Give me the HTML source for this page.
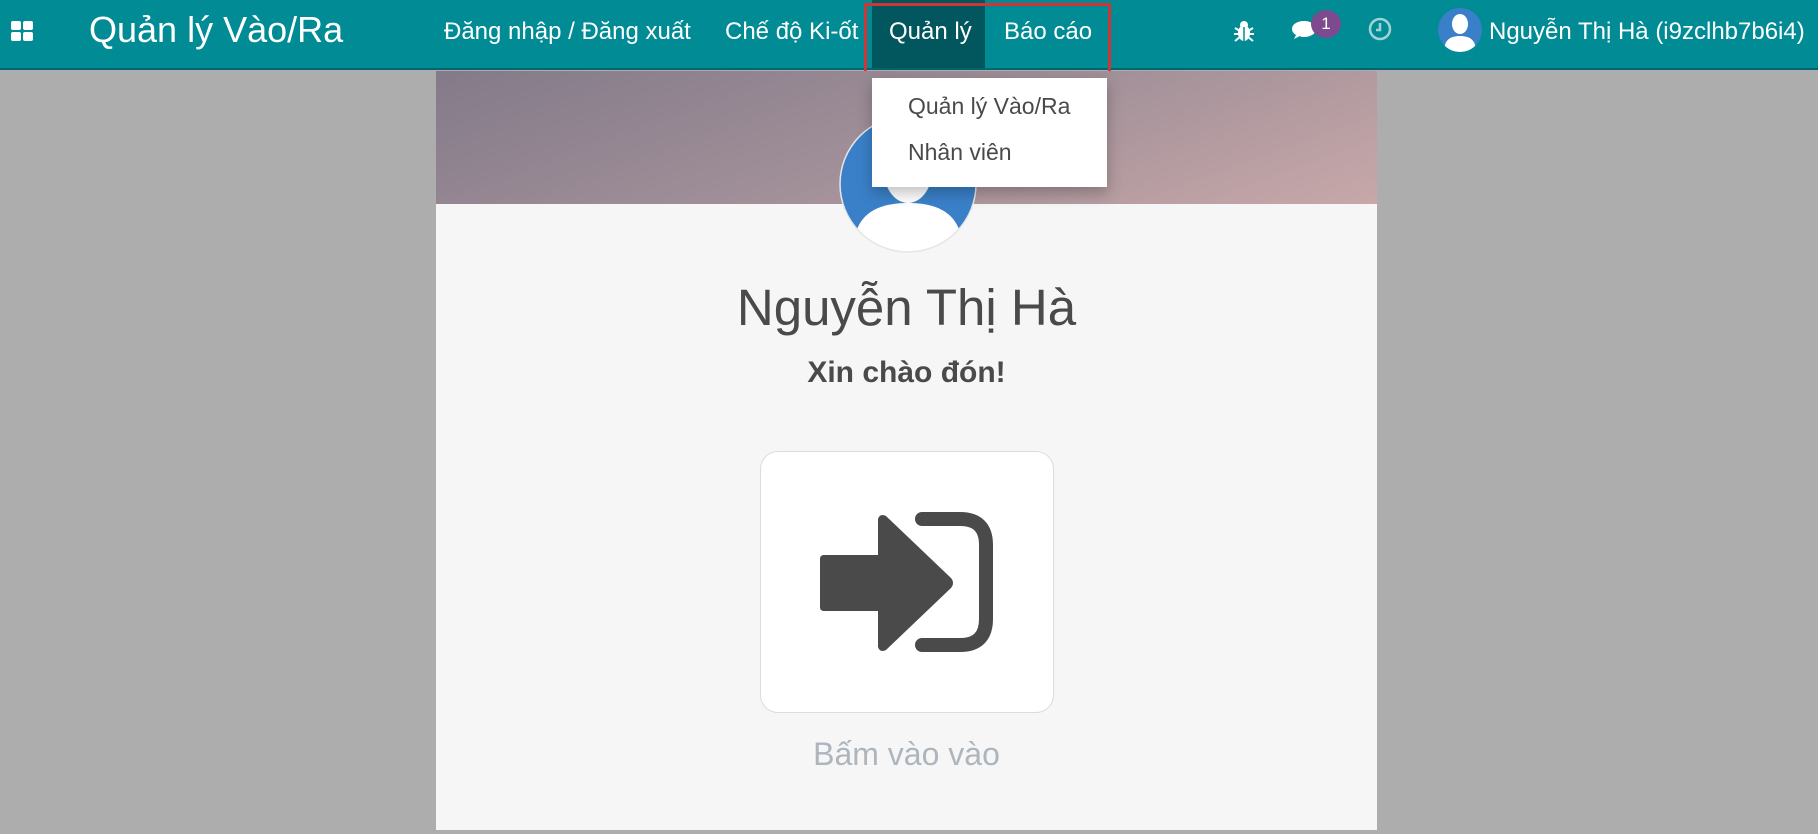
<!DOCTYPE html>
<html><head><meta charset="utf-8"><style>
*{margin:0;padding:0;box-sizing:border-box}
body{width:1818px;height:834px;background:#adadad;font-family:"Liberation Sans",sans-serif;position:relative;overflow:hidden}
.nav{position:absolute;left:0;top:0;width:1818px;height:70px;background:#018b95;border-bottom:2px solid #01666d}
.t{position:absolute;color:#fff;white-space:nowrap}
.abs{position:absolute}
</style></head><body>
<div class="nav">
  <svg class="abs" style="left:11px;top:21px" width="22" height="20" viewBox="0 0 22 20"><rect x="0" y="0" width="10" height="9" rx="2" fill="#fff"/><rect x="12" y="0" width="10" height="9" rx="2" fill="#fff"/><rect x="0" y="11" width="10" height="9" rx="2" fill="#fff"/><rect x="12" y="11" width="10" height="9" rx="2" fill="#fff"/></svg>
  <div class="t" style="left:89px;top:9px;font-size:36px">Quản lý Vào/Ra</div>
  <div class="t" style="left:444px;top:18px;font-size:24px">Đăng nhập / Đăng xuất</div>
  <div class="t" style="left:725px;top:18px;font-size:24px">Chế độ Ki-ốt</div>
  <div class="abs" style="left:872px;top:0;width:113px;height:68px;background:#01575d"></div>
  <div class="t" style="left:889px;top:18px;font-size:24px">Quản lý</div>
  <div class="t" style="left:1004px;top:18px;font-size:24px">Báo cáo</div>
  <svg class="abs" style="left:1233px;top:19px" width="22" height="24" viewBox="0 0 22 24"><ellipse cx="11" cy="14" rx="6" ry="8" fill="#fff"/><circle cx="11" cy="6" r="4" fill="#fff"/><path d="M2 9l5 3M20 9l-5 3M1 15h6M21 15h-6M2 22l5-4M20 22l-5-4" stroke="#fff" stroke-width="2"/><path d="M11 8v14" stroke="#018b95" stroke-width="1.5"/></svg>
  <svg class="abs" style="left:1290px;top:19px" width="30" height="26" viewBox="0 0 30 26"><path d="M2 10c0-5 6-8 12-8s12 3 12 8-6 8-12 8c-2 0-3 0-4-1l-6 3 2-4C3 14 2 12 2 10z" fill="#fff"/></svg>
  <div class="abs" style="left:1311px;top:10px;width:30px;height:28px;border-radius:50%;background:#7c4a8d;color:#fff;font-size:17px;text-align:center;line-height:28px">1</div>
  <svg class="abs" style="left:1367px;top:16px" width="26" height="26" viewBox="0 0 26 26"><circle cx="13" cy="13" r="10" fill="none" stroke="#9fd3d6" stroke-width="2.5"/><path d="M13 7v7h-4" fill="none" stroke="#9fd3d6" stroke-width="2.5"/></svg>
  <svg class="abs" style="left:1438px;top:8px" width="44" height="44" viewBox="0 0 44 44"><defs><clipPath id="c1"><circle cx="22" cy="22" r="22"/></clipPath></defs><circle cx="22" cy="22" r="22" fill="#3a80c9"/><g clip-path="url(#c1)" fill="#fff"><ellipse cx="22" cy="16" rx="8" ry="10"/><path d="M6 44c0-12 6-16 16-16s16 4 16 16z"/></g></svg>
  <div class="t" style="left:1489px;top:18px;font-size:24px">Nguyễn Thị Hà (i9zclhb7b6i4)</div>
</div>
<div class="abs" style="left:864px;top:3px;width:247px;height:74px;border:3px solid #d23535"></div>

<div class="abs" style="left:436px;top:71px;width:941px;height:759px;background:#f6f6f6">
  <div class="abs" style="left:0;top:0;width:941px;height:133px;background:linear-gradient(160deg,#837a89 0%,#a08f98 50%,#c8a8a9 100%)"></div>
  <svg class="abs" style="left:403px;top:44px" width="138" height="138" viewBox="0 0 138 138"><defs><clipPath id="c2"><circle cx="69" cy="69" r="68"/></clipPath></defs><circle cx="69" cy="69" r="68" fill="#3a80c9"/><g clip-path="url(#c2)" fill="#fff"><ellipse cx="69" cy="52" rx="25" ry="36"/><path d="M14 138c0-36 20-50 55-50s55 14 55 50z"/></g><circle cx="69" cy="69" r="68" fill="none" stroke="#e6e6e6" stroke-width="1.5"/></svg>
  <div class="abs" style="left:0;width:941px;top:207px;text-align:center;font-size:51px;color:#4a4a4a">Nguyễn Thị Hà</div>
  <div class="abs" style="left:0;width:941px;top:285px;text-align:center;font-size:30px;font-weight:bold;color:#4a4a4a">Xin chào đón!</div>
  <div class="abs" style="left:324px;top:380px;width:294px;height:262px;background:#fff;border:1.5px solid #dcdcdc;border-radius:18px"></div>
  <svg class="abs" style="left:324px;top:380px" width="294" height="262" viewBox="760 451 294 262">
    <path d="M824 555h54v-36q2-6 8-3l65 62q4 5 0 10l-65 62q-6 3-8-3v-36h-54q-4 0-4-4v-48q0-4 4-4z" fill="#4a4a4a"/>
    <path d="M922 519h38q26 0 26 26v74q0 26-26 26h-38" fill="none" stroke="#4a4a4a" stroke-width="14" stroke-linecap="round"/>
  </svg>
  <div class="abs" style="left:0;width:941px;top:665px;text-align:center;font-size:32px;color:#adb5bd">Bấm vào vào</div>
</div>

<div class="abs" style="left:872px;top:78px;width:235px;height:109px;background:#fff;box-shadow:0 6px 14px rgba(0,0,0,.25)">
  <div class="abs" style="left:36px;top:15px;font-size:23px;color:#4a4a4a;white-space:nowrap">Quản lý Vào/Ra</div>
  <div class="abs" style="left:36px;top:61px;font-size:23px;color:#4a4a4a;white-space:nowrap">Nhân viên</div>
</div>
</body></html>
